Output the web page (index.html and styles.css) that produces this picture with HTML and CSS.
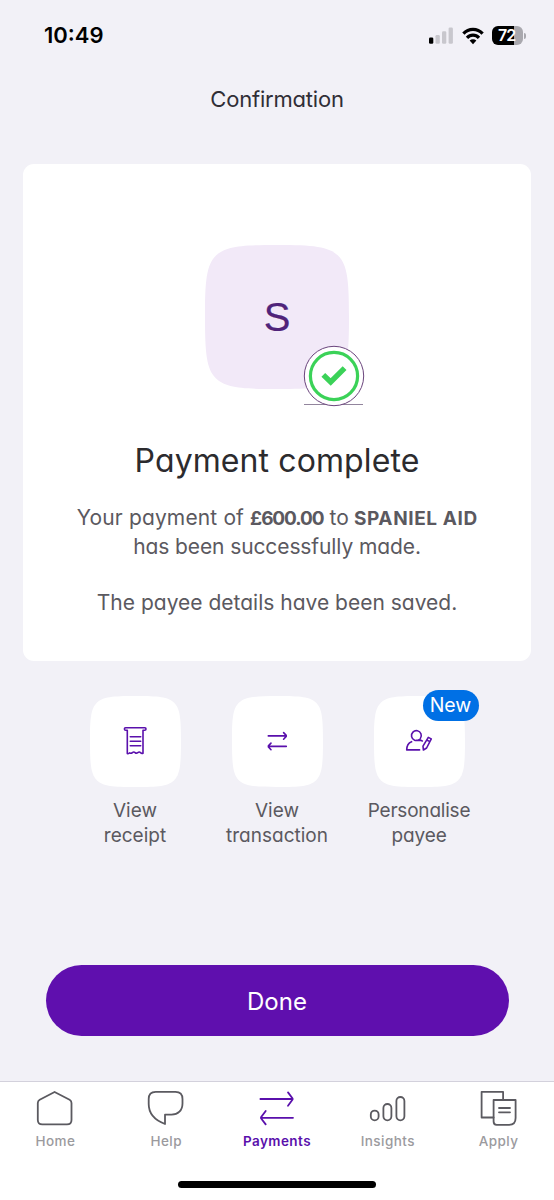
FILE: index.html
```html
<!DOCTYPE html>
<html lang="en">
<head>
<meta charset="utf-8">
<title>Confirmation</title>
<link rel="stylesheet" href="styles.css">
</head>
<body>
<div class="screen">
  <header class="status">
    <span class="time">10:49</span>
    <div class="indicators">
      <svg class="signal" width="25" height="18" viewBox="0 0 25 18"><rect x="0" y="10.5" width="4.3" height="6.2" rx="1.3" fill="#000"/><g fill="#c8c7cd"><rect x="6.5" y="8" width="4.3" height="8.7" rx="1.3"/><rect x="13" y="4.3" width="4.3" height="12.4" rx="1.3"/><rect x="19.6" y="0.4" width="4.3" height="16.3" rx="1.3"/></g></svg>
      <svg class="wifi" width="22" height="18" viewBox="0 0 22 18"><g fill="none" stroke="#000" stroke-width="3.2"><path d="M1.4 6.6C6.7 .9 15.3 .9 20.6 6.6"/><path d="M5 10.8C8.4 7.1 13.6 7.1 17 10.8"/></g><path d="M7.6 13.6C9.6 11.8 12.4 11.8 14.4 13.6L11 17.2Z" fill="#000"/></svg>
      <div class="battery"><span class="battery-level">72</span></div>
    </div>
  </header>
  <h1 class="title">Confirmation</h1>

  <main class="card">
    <div class="avatar">
      <svg class="tile-shape" viewBox="0 0 100 100" preserveAspectRatio="none"><path d="M50 0C75 0 86 1 92.5 7.5C99 14 100 25 100 50C100 75 99 86 92.5 92.5C86 99 75 100 50 100C25 100 14 99 7.5 92.5C1 86 0 75 0 50C0 25 1 14 7.5 7.5C14 1 25 0 50 0Z" fill="#f2e9f8"/></svg>
      <span class="initial">S</span>
      <svg class="check" width="62" height="62" viewBox="0 0 62 62"><path d="M1 59.5H60" stroke="#92859d" stroke-width="1"/><circle cx="31" cy="31" r="29.7" fill="#fff" stroke="#6a447c" stroke-width="1"/><circle cx="31" cy="31" r="23.6" fill="none" stroke="#3bd258" stroke-width="3.2"/><path d="M20.3 29.9L27.7 37L41.6 23.2" fill="none" stroke="#3bd258" stroke-width="5.4"/></svg>
    </div>
    <h2 class="headline">Payment complete</h2>
    <p class="message"><span class="lead">Your payment of <b class="amount">£600.00</b> to <b class="payee-name">SPANIEL AID</b></span><br><span class="made">has been successfully made.</span></p>
    <p class="message saved">The payee details have been saved.</p>
  </main>

  <section class="actions">
    <div class="action">
      <div class="tile">
        <svg class="tile-shape" viewBox="0 0 100 100" preserveAspectRatio="none"><path d="M50 0C75 0 86 1 92.5 7.5C99 14 100 25 100 50C100 75 99 86 92.5 92.5C86 99 75 100 50 100C25 100 14 99 7.5 92.5C1 86 0 75 0 50C0 25 1 14 7.5 7.5C14 1 25 0 50 0Z" fill="#fff"/></svg>
        <svg class="glyph" width="90" height="90" viewBox="0 0 90 90"><path d="M37.3 34.2H35.8Q34.4 34.2 34.4 32.9Q34.4 31.7 35.5 31.7H54.9Q56 31.7 56 32.9Q56 34.2 54.6 34.2H53V57.2Q51.7 57.8 50.5 56.6Q49.2 55.4 47.8 56.6Q46.4 57.8 45.1 56.6Q43.8 55.4 42.4 56.6Q41 57.8 39.8 56.8Q38.6 58 37.3 57.5ZM40.3 40.8H50.7M40.3 45.3H50.7M40.3 49.8H50.7"/></svg>
      </div>
      <span class="label">View</span><span class="label">receipt</span>
    </div>
    <div class="action">
      <div class="tile">
        <svg class="tile-shape" viewBox="0 0 100 100" preserveAspectRatio="none"><path d="M50 0C75 0 86 1 92.5 7.5C99 14 100 25 100 50C100 75 99 86 92.5 92.5C86 99 75 100 50 100C25 100 14 99 7.5 92.5C1 86 0 75 0 50C0 25 1 14 7.5 7.5C14 1 25 0 50 0Z" fill="#fff"/></svg>
        <svg class="glyph" width="90" height="90" viewBox="0 0 90 90"><path d="M36.3 39.9H54M51.6 36.6L54.2 39.4V40.4L51.6 43.2M54.3 50.4H36.6M39 47.1L36.4 49.9V50.9L39 53.7"/></svg>
      </div>
      <span class="label">View</span><span class="label">transaction</span>
    </div>
    <div class="action">
      <div class="tile">
        <svg class="tile-shape" viewBox="0 0 100 100" preserveAspectRatio="none"><path d="M50 0C75 0 86 1 92.5 7.5C99 14 100 25 100 50C100 75 99 86 92.5 92.5C86 99 75 100 50 100C25 100 14 99 7.5 92.5C1 86 0 75 0 50C0 25 1 14 7.5 7.5C14 1 25 0 50 0Z" fill="#fff"/></svg>
        <svg class="glyph" width="90" height="90" viewBox="0 0 90 90"><path d="M48.3 44.9L45.2 43.6A4.9 4.9 0 1 1 46.4 42.4M46.6 44.4H42.4M37.6 45.7C34.8 46.8 32.7 49.8 32.7 53.9H45.6M54.3 41.4L57.3 42.9L52.6 52L49.4 54L49 50.2ZM52.8 44L55.9 45.6"/></svg>
        <span class="badge">New</span>
      </div>
      <span class="label personalise">Personalise</span><span class="label payee">payee</span>
    </div>
  </section>

  <button class="done">Done</button>

  <nav class="tabs">
    <div class="tab">
      <svg width="40" height="40" viewBox="0 0 40 40"><path d="M19.6 3L34.6 10.8Q36.5 12 36.5 14V31Q36.5 35.4 32 35.4H7.3Q2.8 35.4 2.8 31V14Q2.8 12 4.7 10.8Z"/></svg>
      <span>Home</span>
    </div>
    <div class="tab">
      <svg width="40" height="40" viewBox="0 0 40 40"><path d="M9.7 2.8H29.5Q36.5 2.8 36.5 10V14.5C36.5 21.5 32 25.7 25.5 25.7H19V35C9.7 31.5 2.7 25 2.7 15V10Q2.7 2.8 9.7 2.8Z"/></svg>
      <span>Help</span>
    </div>
    <div class="tab active">
      <svg width="40" height="40" viewBox="0 0 40 40"><path d="M3.4 10H35.6M31 3.4L35.6 9.5V10.5L31 16.8M36 28.8H4M8.7 22L4 28.3V29.3L8.7 35.4"/></svg>
      <span>Payments</span>
    </div>
    <div class="tab">
      <svg width="40" height="40" viewBox="0 0 40 40"><rect x="2.8" y="21.6" width="7.8" height="9.7" rx="3.9"/><rect x="15.4" y="15" width="8" height="16.3" rx="4"/><rect x="28.4" y="8" width="8" height="23.3" rx="4"/></svg>
      <span>Insights</span>
    </div>
    <div class="tab">
      <svg width="40" height="40" viewBox="0 0 40 40"><path d="M14.6 28.5H2.6V2.8H24.1V11"/><path d="M14.6 11H36.6V29Q36.6 35.8 30.1 35.8H17.6Q14.6 35.8 14.6 32.5ZM20 19H31M20 23.3H31"/></svg>
      <span>Apply</span>
    </div>
  </nav>
  <footer class="home-area"><div class="home-bar"></div></footer>
</div>
</body>
</html>
```
FILE: styles.css
```css
* { box-sizing: border-box; margin: 0; }
body { background: #f2f1f7; }
svg { display: block; }
.screen {
  width: 554px; height: 1200px;
  display: flex; flex-direction: column;
  overflow: hidden;
  background: #f2f1f7;
  font-family: Inter, "Liberation Sans", sans-serif;
  font-feature-settings: "cv11";
  color: #5b5960;
}
.status {
  height: 72px; padding: 0 27px 0 44px;
  display: flex; align-items: center; justify-content: space-between;
  flex: none;
}
.time { font-size: 22px; line-height: 26px; margin-top: -2px; font-weight: 600; color: #000; }
.indicators { display: flex; align-items: center; margin-top: -1px; }
.wifi { margin: 0 8px 0 8px; }
.battery {
  position: relative; width: 31px; height: 19px; border-radius: 6px;
  background: linear-gradient(90deg, #000 22px, #a9a8ae 22px);
  margin-right: 4px;
}
.battery::after {
  content: ""; position: absolute; left: 32.3px; top: 6.5px;
  width: 2px; height: 6px; border-radius: 0 3px 3px 0; background: #a9a8ae;
}
.battery-level {
  display: block; padding-left: 6px; color: #fff;
  font-size: 16px; line-height: 19px; font-weight: 600; letter-spacing: -.9px;
}
.title {
  height: 54px; line-height: 54px; flex: none;
  font-size: 22px; font-weight: 400; letter-spacing: -.2px; text-align: center; color: #302e36;
}
.card {
  flex: none; margin: 38px 23px 0; height: 497px; padding-top: 81px;
  border-radius: 11px; background: #fff;
  display: flex; flex-direction: column; align-items: center; text-align: center;
}
.avatar {
  position: relative; width: 144px; height: 144px; flex: none;
  display: flex; align-items: center; justify-content: center;
}
.tile-shape { position: absolute; inset: 0; width: 100%; height: 100%; }
.initial {
  position: relative; color: #50237a; font-size: 40px; line-height: 46px;
  font-family: "Liberation Sans", sans-serif;
  -webkit-text-stroke: .2px #50237a;
}
.check { position: absolute; left: 98px; top: 100px; }
.headline { margin-top: 52px; line-height: 40px; font-size: 32px; font-weight: 400; letter-spacing: .1px; color: #2c2b2e; }
.message { margin-top: 23px; font-size: 21px; line-height: 28px; white-space: nowrap; }
.message b { font-weight: 700; font-size: 19px; }
.lead { letter-spacing: .14px; }
.message .amount { letter-spacing: -1.1px; }
.message .payee-name { letter-spacing: .6px; margin: 0 -.6px 0 -1px; }
.made { letter-spacing: -.1px; }
.saved { margin-top: 28px; }
.actions { display: flex; justify-content: center; flex: none; height: 180px; margin-top: 35px; }
.action { width: 142px; display: flex; flex-direction: column; align-items: center; }
.tile { position: relative; width: 91px; height: 91px; margin-bottom: 12px; }
.glyph {
  position: relative; fill: none; stroke: #5a10ac; stroke-width: 1.6;
  stroke-linecap: round; stroke-linejoin: round;
}
.badge {
  position: absolute; left: 49px; top: -6.5px; width: 56px; height: 31px;
  border-radius: 16px; background: #0070e5; color: #fff;
  font-size: 19.5px; line-height: 31px; text-align: center;
}
.label { font-size: 19px; line-height: 24.5px; white-space: nowrap; }
.personalise { letter-spacing: -.2px; }
.payee { letter-spacing: -.1px; }
.done {
  flex: none; width: 463px; height: 71px; margin: 89px 0 0 45.5px; padding: 2px 0 0;
  border: 0; border-radius: 36px; background: #5f0fae; color: #fff;
  font: inherit; font-size: 24px; line-height: 69px; font-feature-settings: inherit;
}
.tabs {
  flex: none; display: flex; height: 79px; margin-top: 45px; padding-top: 7px;
  border-top: 1px solid #d3d1dc; background: #fff;
  font-size: 13.5px; font-weight: 500; font-feature-settings: normal; color: #9b9a9e;
}
.tab { flex: 1; display: flex; flex-direction: column; align-items: center; gap: 3px; }
.tab svg { fill: none; stroke: #5b5a60; stroke-width: 1.8; stroke-linecap: round; stroke-linejoin: round; }
.tab span { line-height: 18px; letter-spacing: .45px; }
.active { color: #5a10ac; font-weight: 600; }
.tab.active svg { stroke: #5a10ac; }
.home-area { flex: 1; background: #fff; padding-top: 21px; }
.home-bar { width: 198px; height: 7px; margin: 0 auto; border-radius: 4px; background: #000; }
```
